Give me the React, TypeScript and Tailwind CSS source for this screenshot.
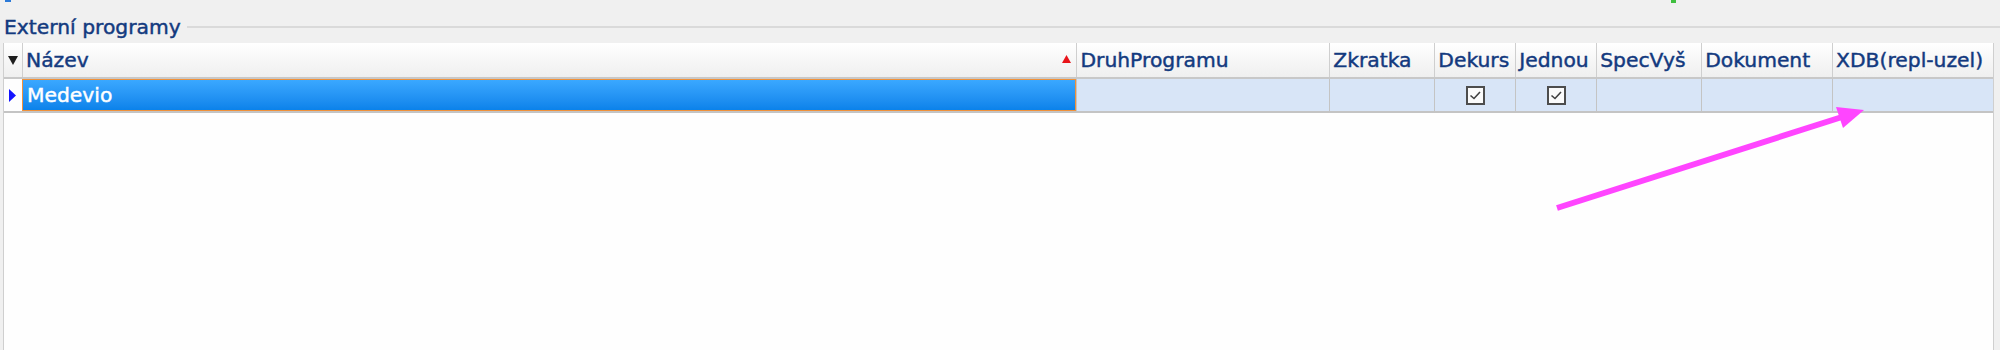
import React from "react";

const cols = [
  { key: "druh", title: "DruhProgramu", w: "w-[253px]" },
  { key: "zkratka", title: "Zkratka", w: "w-[105px]" },
  { key: "dekurs", title: "Dekurs", w: "w-[81px]", check: true },
  { key: "jednou", title: "Jednou", w: "w-[81px]", check: true },
  { key: "spec", title: "SpecVyš", w: "w-[105px]" },
  { key: "dokument", title: "Dokument", w: "w-[131px]" },
  { key: "xdb", title: "XDB(repl-uzel)", w: "w-[161px]" },
];

function CheckBox() {
  return (
    <svg width="19" height="19" viewBox="0 0 19 19">
      <rect x="1" y="1" width="17" height="17" fill="#fbfbfb" stroke="#4d4d4d" strokeWidth="2" />
      <path d="M4.5 9.5 L8 12.5 L14 6" fill="none" stroke="#3f3f3f" strokeWidth="1.6" />
    </svg>
  );
}

export default function App() {
  return (
    <div
      className="relative h-[350px] w-[2000px] overflow-hidden bg-[#f0f0f0] text-[20.3px] leading-6 text-[#133a7f] [-webkit-text-stroke:0.45px_currentColor]"
      style={{ fontFamily: '"DejaVu Sans", sans-serif' }}
    >
      {/* bits of the toolbar cut off above */}
      <div className="absolute left-[5px] top-0 h-[2px] w-[6px] bg-[#2b7ad8]" />
      <div className="absolute left-[1671px] top-0 h-[3px] w-[5px] bg-[#3fbf3f]" />

      {/* group title */}
      <div className="flex items-center pt-[15px] pb-[4px]">
        <span className="pl-[4px] pr-[6px] whitespace-nowrap">Externí programy</span>
        <div className="h-[2px] flex-1 bg-[#dadada]" />
      </div>

      {/* grid */}
      <div className="ml-[3px] h-[307px] w-[1991px] border-l border-r border-[#cfcfcf] bg-[#fefefe]">
        {/* header */}
        <div className="flex h-[36px] border-b-2 border-[#c8c8c8] bg-gradient-to-b from-white to-[#efefef]">
          <div className="flex w-[18px] items-center justify-center">
            <svg width="12" height="11" viewBox="0 0 12 11">
              <path d="M1 1 L11 1 L6 10 Z" fill="#1e1e1e" />
            </svg>
          </div>
          <div className="flex w-[1055px] items-center border-l border-[#cfcfcf] pl-[3px]">
            <span className="flex-1">Název</span>
            <svg width="11" height="10" viewBox="0 0 11 10" className="mr-[4px] mb-[2px]">
              <path d="M5.5 1 L10 9 L1 9 Z" fill="#e8141a" />
            </svg>
          </div>
          {cols.map((c) => (
            <div
              key={c.key}
              className={`${c.w} flex items-center overflow-hidden whitespace-nowrap border-l border-[#cfcfcf] pl-[3px]`}
            >
              {c.title}
            </div>
          ))}
        </div>

        {/* data row */}
        <div className="flex h-[34px] border-b-2 border-[#c4c4c4] bg-[#d8e5f7]">
          <div className="flex w-[18px] items-center justify-center bg-[#fefefe]">
            <svg width="9" height="15" viewBox="0 0 9 15">
              <path d="M1 1 L8 7.5 L1 14 Z" fill="#1414ff" />
            </svg>
          </div>
          <div className="flex w-[1055px] items-center border border-[#f0913a] bg-gradient-to-b from-[#3aa8ff] to-[#0a82ea] pl-[4px] text-white">
            Medevio
          </div>
          {cols.map((c) => (
            <div
              key={c.key}
              className={`${c.w} flex items-center justify-center border-l border-[#c4c4c4]`}
            >
              {c.check && <CheckBox />}
            </div>
          ))}
        </div>
      </div>

      {/* annotation arrow */}
      <svg className="pointer-events-none absolute left-0 top-0" width="2000" height="350">
        <line x1="1557" y1="208" x2="1842" y2="117" stroke="#ff45ff" strokeWidth="6" />
        <polygon points="1864,110 1836,107 1843,128" fill="#ff45ff" />
      </svg>
    </div>
  );
}
